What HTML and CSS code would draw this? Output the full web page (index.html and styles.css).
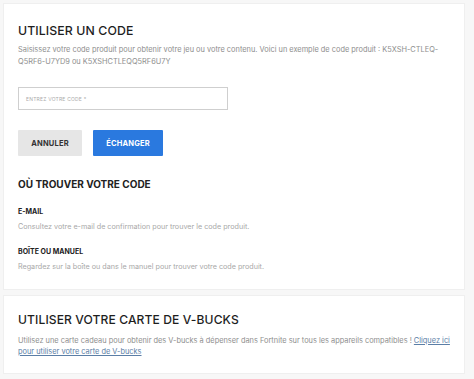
FILE: index.html
```html
<!DOCTYPE html>
<html lang="fr">
<head>
<meta charset="utf-8">
<link rel="stylesheet" href="styles.css">
</head>
<body>
<div class="page">
  <section class="card card-code">
    <h1 class="title">UTILISER UN CODE</h1>
    <p class="desc">Saisissez votre code produit pour obtenir votre jeu ou votre contenu. Voici un exemple de code produit : K5XSH-CTLEQ-Q5RF6-U7YD9 ou K5XSHCTLEQQ5RF6U7Y</p>
    <div class="field"><span class="placeholder">ENTREZ VOTRE CODE *</span></div>
    <div class="actions">
      <button class="btn btn-cancel">ANNULER</button>
      <button class="btn btn-primary">ÉCHANGER</button>
    </div>
    <h2 class="subtitle">OÙ TROUVER VOTRE CODE</h2>
    <h3 class="label">E-MAIL</h3>
    <p class="hint">Consultez votre e-mail de confirmation pour trouver le code produit.</p>
    <h3 class="label label-2">BOÎTE OU MANUEL</h3>
    <p class="hint">Regardez sur la boîte ou dans le manuel pour trouver votre code produit.</p>
  </section>
  <section class="card card-vbucks">
    <h1 class="title">UTILISER VOTRE CARTE DE V-BUCKS</h1>
    <p class="desc desc-v">Utilisez une carte cadeau pour obtenir des V-bucks à dépenser dans Fortnite sur tous les appareils compatibles ! <a href="#" class="link">Cliquez ici pour utiliser votre carte de V-bucks</a></p>
  </section>
</div>
</body>
</html>
```

FILE: styles.css
```css
* { box-sizing: border-box; margin: 0; padding: 0; }
html, body { background: #f7f7f7; }
body {
  font-family: "Inter", "Noto Sans", sans-serif;
  color: #222;
}
.page {
  padding: 3px 9px 0 3px;
  display: flex;
  flex-direction: column;
  gap: 5px;
}
.card {
  background: #fff;
  border: 1px solid #efefef;
  padding: 0 14px;
}
.card-code { height: 287px; padding-top: 17px; }
.card-vbucks { height: 79px; padding-top: 14px; }
.title {
  font-size: 12.3px;
  font-weight: 500;
  letter-spacing: 0.1px;
  line-height: 20px;
  color: #1e1e1e;
}
.card-vbucks .title { font-size: 12.1px; }
.desc {
  font-size: 7.4px;
  line-height: 11.5px;
  color: #8e8e8e;
  margin-top: 3px;
}
.desc-v { margin-top: 5px; line-height: 11px; }
.link { color: #5b7ea6; line-height: 11px; }
.field {
  width: 210px;
  height: 23px;
  border: 1px solid #cfcfcf;
  margin-top: 20px;
  display: flex;
  align-items: center;
  padding-left: 7px;
}
.placeholder {
  font-size: 5px;
  color: #aaa;
  letter-spacing: 0.2px;
}
.actions {
  display: flex;
  gap: 11px;
  margin-top: 20px;
}
.btn {
  border: none;
  border-radius: 1px;
  height: 26px;
  font-family: inherit;
  font-size: 7.5px;
  font-weight: 700;
  letter-spacing: 0.2px;
}
.btn-cancel { width: 64px; background: #e6e6e6; color: #333; }
.btn-primary { width: 70px; background: #2a79df; color: #fff; }
.subtitle {
  font-size: 10px;
  font-weight: 700;
  line-height: 14px;
  margin-top: 21px;
  color: #222;
}
.label {
  font-size: 7px;
  font-weight: 700;
  line-height: 10px;
  margin-top: 16px;
  color: #222;
}
.label-2 { margin-top: 15px; }
.hint {
  font-size: 7.2px;
  line-height: 10px;
  color: #a8a8a8;
  margin-top: 5px;
}
```
